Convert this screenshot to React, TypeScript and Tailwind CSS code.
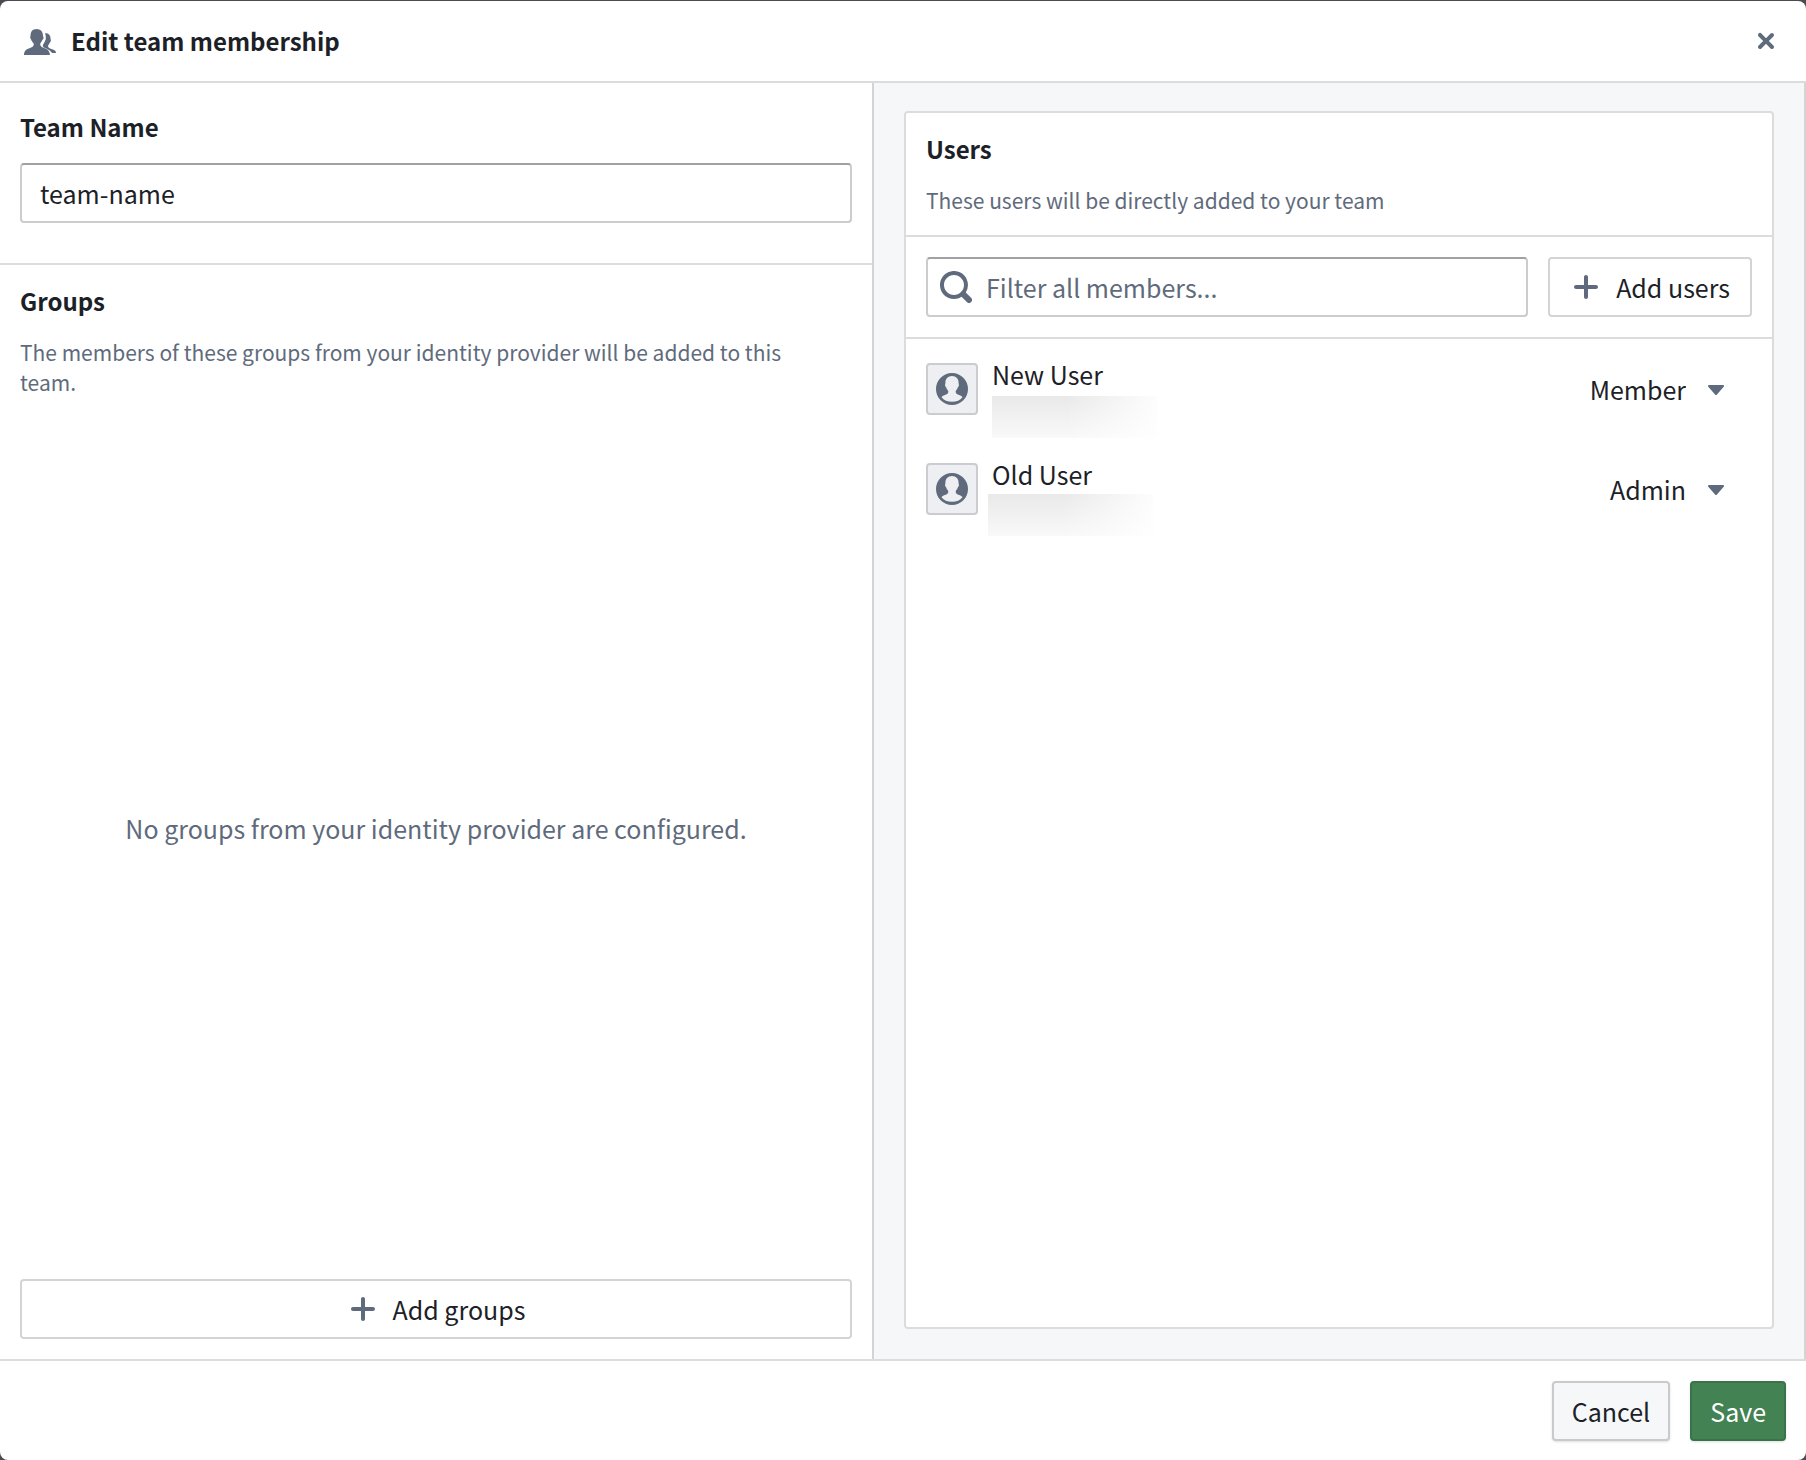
import React from "react";

const ink = "fill-[#5f6b7c] shrink-0";

function Plus() {
  return (
    <svg viewBox="0 0 16 16" className={ink + " size-8"} aria-hidden="true">
      <path d="M13 7H9V3c0-.55-.45-1-1-1s-1 .45-1 1v4H3c-.55 0-1 .45-1 1s.45 1 1 1h4v4c0 .55.45 1 1 1s1-.45 1-1V9h4c.55 0 1-.45 1-1s-.45-1-1-1z" />
    </svg>
  );
}

function Cross() {
  return (
    <svg viewBox="0 0 16 16" className={ink + " size-8"} aria-hidden="true">
      <path d="M9.41 8l2.29-2.29c.19-.18.3-.43.3-.71a1.003 1.003 0 00-1.71-.71L8 6.59l-2.29-2.3a1.003 1.003 0 00-1.42 1.42L6.59 8 4.3 10.29c-.19.18-.3.43-.3.71a1.003 1.003 0 001.71.71L8 9.41l2.29 2.29c.18.19.43.3.71.3a1.003 1.003 0 00.71-1.71L9.41 8z" />
    </svg>
  );
}

function Search() {
  return (
    <svg viewBox="0 0 16 16" className={ink + " size-8"} aria-hidden="true">
      <path d="M15.55 13.43l-2.67-2.68a6.94 6.94 0 001.11-3.76c0-3.87-3.13-7-7-7s-7 3.13-7 7 3.13 7 7 7c1.39 0 2.68-.42 3.76-1.11l2.68 2.67a1.498 1.498 0 102.12-2.12zm-8.56-1.44c-2.76 0-5-2.24-5-5s2.24-5 5-5 5 2.24 5 5-2.24 5-5 5z" />
    </svg>
  );
}

function Caret() {
  return (
    <svg viewBox="0 0 16 16" className={ink + " pointer-events-none absolute right-5 size-8"} aria-hidden="true">
      <path d="M12 6.5c0-.28-.22-.5-.5-.5h-7a.495.495 0 00-.37.83l3.5 4c.09.1.22.17.37.17s.28-.07.37-.17l3.5-4c.08-.09.13-.2.13-.33z" />
    </svg>
  );
}

function People() {
  return (
    <svg viewBox="0 0 32 32" className={ink + " size-8"} aria-hidden="true">
      <path d="M12.500 4c4 0 6.500 2.800 6.500 6.500 0 1 .7 1.200.5 2.800-.2 1.200-1.100 1.200-1.500 2.500-.4 1.200-1.800 2.200-1.800 3.200 0 2.400 1.300 3 3.800 4 3.500 1.300 5.500 2.500 6 7H0c0-4.500 2.500-5.700 6-7 2.500-1 3.800-1.600 3.800-4 0-1-1.800-2-2.200-3.200-.4-1.300-1-1.500-1.300-2.700-.2-1.500.2-1.700.2-2.600C6.500 6.800 8.500 4 12.500 4z" />
      <path d="M21 8.200c3.500-.4 5.500 1.800 5.500 5 0 1.300.6 1.500.3 2.800-.3 1.200-1 1.300-1.400 2.500-.3 1-1.400 1.600-1.400 2.600 0 1.800 1.300 2.100 3.500 3 3 1.200 4.500 1.600 4.500 3.900h-4c-1.200-2.500-3.700-3.600-6.500-4.800-1.900-.8-2.600-1.100-2.700-2.500.1-1.400 1.300-2.300 2-4.300 1.500-2 1.300-5.400.2-8.200z" />
    </svg>
  );
}

function UserIcon() {
  return (
    <svg viewBox="0 0 32 32" className={ink + " size-8"} aria-hidden="true">
      <path
        fillRule="evenodd"
        d="M16 0a16 16 0 100 32 16 16 0 000-32zM16 3c4.200 0 6.800 2.900 6.600 7 0 1.200.5 1.400.3 2.600-.2 1.300-1 1.300-1.400 2.600-.5 1.400-1.800 2.300-1.800 3.300 0 2.300 1.300 2.700 3.400 3.500 2 .8 2.700 1.300 3.400 2.200C24.200 27.200 20.500 28.800 16 28.800S7.800 27.200 5.500 24.200c.7-.9 1.400-1.400 3.400-2.200 2.100-.8 3.400-1.200 3.400-3.500 0-1-1.300-1.900-1.800-3.300-.4-1.300-1.200-1.300-1.400-2.600-.2-1.200.3-1.400.3-2.600C9.200 5.900 11.800 3 16 3z"
      />
    </svg>
  );
}

const users = [
  { name: "New User", role: "Member", blur: "mt-[7px] ml-0" },
  { name: "Old User", role: "Admin", blur: "mt-[5px] -ml-1" },
];

const heading = "text-[24px] font-bold";
const hint = "text-[21px] leading-[30px] text-[#5f6b7c]";
const outline =
  "flex h-15 items-center justify-center gap-[14px] rounded border-2 border-[#d3d4d6] bg-white px-5";
const field = "h-15 w-full rounded border-2 border-[#cbcccd] border-t-[#a0a1a3] bg-white outline-none";

export default function App() {
  return (
    <div className="min-h-screen bg-[#4b4a51] pt-px font-['Noto_Sans_CJK_SC',sans-serif] text-[25px] leading-9 text-[#1c2127]">
      <main className="flex min-h-[calc(100vh-1px)] flex-col overflow-hidden rounded-lg bg-white">
        <header className="flex h-[82px] items-center border-b-2 border-[#dcdcdd] px-6">
          <People />
          <h1 className={heading + " ml-[15px] flex-1"}>Edit team membership</h1>
          <button type="button" aria-label="Close" className="flex items-center">
            <Cross />
          </button>
        </header>

        <div className="grid flex-1 grid-cols-[872fr_934fr]">
          <section className="flex flex-col">
            <div className="border-b-2 border-[#dcdcdd] px-5 pt-[26px] pb-10">
              <label htmlFor="team" className={heading + " block"}>
                Team Name
              </label>
              <input id="team" defaultValue="team-name" className={field + " mt-[18px] px-[18px]"} />
            </div>
            <div className="flex flex-1 flex-col px-5 pt-[18px] pb-5">
              <h2 className={heading}>Groups</h2>
              <p className={hint + " mt-[18px] pr-5"}>
                The members of these groups from your identity provider will be added to this team.
              </p>
              <p className="mb-5 flex flex-1 items-center justify-center text-[#5f6b7c]">
                No groups from your identity provider are configured.
              </p>
              <button type="button" className={outline}>
                <Plus />
                Add groups
              </button>
            </div>
          </section>

          <section className="flex flex-col border-x-2 border-[#d3d4d6] bg-[#f6f7f9] p-[30px] pt-7">
            <div className="flex flex-1 flex-col rounded border-2 border-[#dcdcdd] bg-white">
              <div className="border-b-2 border-[#dcdcdd] px-5 pt-[18px] pb-5">
                <h2 className={heading}>Users</h2>
                <p className={hint + " mt-[18px]"}>These users will be directly added to your team</p>
              </div>
              <div className="flex gap-5 border-b-2 border-[#dcdcdd] p-5">
                <div className="relative flex flex-1 items-center">
                  <div className="pointer-events-none absolute left-[14px]">
                    <Search />
                  </div>
                  <input
                    type="search"
                    aria-label="Filter all members"
                    placeholder="Filter all members..."
                    className={field + " pl-[58px] placeholder:text-[#5f6b7c]"}
                  />
                </div>
                <button type="button" className={outline}>
                  <Plus />
                  Add users
                </button>
              </div>
              <ul>
                {users.map((u) => (
                  <li key={u.name} className="flex h-25 px-5 pt-5">
                    <div className="mt-1 flex size-[52px] items-center justify-center rounded border-2 border-[#cbccd0] bg-[#edeff2]">
                      <UserIcon />
                    </div>
                    <div className="ml-[14px] flex-1">
                      <div className="leading-[30px]">{u.name}</div>
                      <div className={"h-[42px] w-[165px] bg-linear-to-b from-[#e9e9e9] to-[#f9f9f9] " + u.blur}>
                        <div className="h-full bg-linear-to-r from-white/0 from-45% to-white/90" />
                      </div>
                    </div>
                    <div className="relative flex h-15 items-center">
                      <select
                        aria-label={"Role of " + u.name}
                        defaultValue={u.role}
                        className="h-15 appearance-none bg-transparent pr-[66px] text-right outline-none [field-sizing:content]"
                      >
                        <option>Member</option>
                        <option>Admin</option>
                      </select>
                      <Caret />
                    </div>
                  </li>
                ))}
              </ul>
            </div>
          </section>
        </div>

        <footer className="flex h-[101px] justify-end gap-5 border-t-2 border-[#dcdcdd] p-5">
          <button type="button" className="h-15 rounded border-2 border-[#c9cacc] bg-[#f6f7f9] px-[18px] shadow-sm">
            Cancel
          </button>
          <button
            type="button"
            className="h-15 rounded border-2 border-[#38734a] bg-[#438253] px-[18px] text-white shadow-sm"
          >
            Save
          </button>
        </footer>
      </main>
    </div>
  );
}
